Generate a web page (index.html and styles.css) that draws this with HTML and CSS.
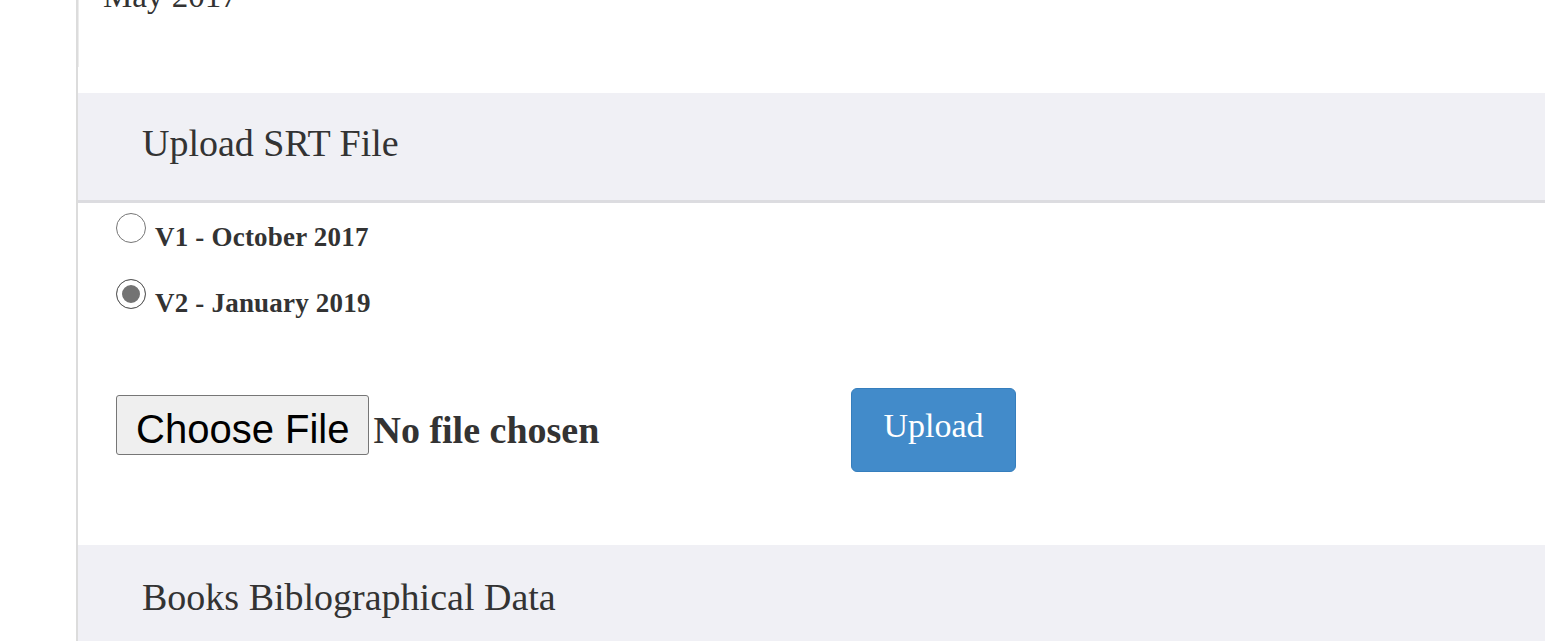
FILE: index.html
```html
<!DOCTYPE html>
<html lang="en">
<head>
<meta charset="utf-8">
<title>Upload SRT File</title>
<link rel="stylesheet" href="styles.css">
</head>
<body>
<div class="main">
  <div class="intro"><p>May 2017</p></div>
  <section class="panel">
    <h2 class="panel-head">Upload SRT File</h2>
    <form class="panel-body">
      <label class="radio-row"><input type="radio" name="ver" class="radio"><span class="radio-label">V1 - October 2017</span></label>
      <label class="radio-row"><input type="radio" name="ver" class="radio" checked><span class="radio-label">V2 - January 2019</span></label>
      <div class="file-row">
        <label class="file">
          <span class="file-btn">Choose File</span>
          <span class="file-name">No file chosen</span>
          <input type="file" class="file-input">
        </label>
        <button type="button" class="upload-btn">Upload</button>
      </div>
    </form>
  </section>
  <section class="panel panel-last">
    <h2 class="panel-head">Books Biblographical Data</h2>
  </section>
</div>
</body>
</html>
```
FILE: styles.css
```css
html, body {
  margin: 0;
  padding: 0;
  background: #fff;
  overflow: hidden;
}
body {
  font-family: "Liberation Serif", "Times New Roman", serif;
  color: #333;
}
.main {
  margin-left: 76px;
  border-left: 2px solid #dcdcdc;
}
.intro {
  margin-top: -23px;
  height: 90px;
  border-left: 1px solid #ececec;
  padding-left: 24px;
}
.intro p {
  margin: 0;
  font-size: 33px;
  line-height: 38px;
}
.panel {
  margin-top: 26px;
}
.panel-last {
  margin-top: 0;
  background: #f0f0f5;
  height: 96px;
}
.panel-head {
  margin: 0;
  padding: 29px 64px 36px;
  font-size: 38px;
  line-height: 42px;
  font-weight: normal;
  background: #f0f0f5;
  border-bottom: 3px solid #dcdce0;
}
.panel-last .panel-head {
  border-bottom: 0;
  padding: 31px 64px 23px;
}
.panel-body {
  margin: 0;
  padding: 10px 0 73px 38px;
}
.radio-row {
  display: flex;
  align-items: flex-start;
  gap: 9px;
  height: 40px;
  margin-bottom: 26px;
}
.radio {
  appearance: none;
  -webkit-appearance: none;
  margin: 0;
  width: 30px;
  height: 30px;
  border: 1px solid #767676;
  border-radius: 50%;
  background: #fff;
  flex: none;
}
.radio:checked {
  border-color: #5a5a5a;
  background: #737373;
  box-shadow: inset 0 0 0 5px #fff;
}
.radio-label {
  margin-top: 8px;
  font-size: 27px;
  line-height: 32px;
  font-weight: bold;
  letter-spacing: 0.2px;
}
.file-row {
  display: flex;
  align-items: flex-start;
  margin-top: 69px;
}
.file {
  width: 735px;
  display: flex;
  align-items: baseline;
  margin-top: 7px;
}
.file-btn {
  box-sizing: border-box;
  height: 60px;
  padding: 6px 19px 0;
  line-height: 54px;
  font-family: "Liberation Sans", Arial, sans-serif;
  font-size: 40px;
  color: #000;
  background: #efefef;
  border: 1px solid #767676;
  border-radius: 3px;
}
.file-name {
  margin-left: 4px;
  font-size: 38px;
  font-weight: bold;
  color: #333;
}
.file-input {
  display: none;
}
.upload-btn {
  box-sizing: border-box;
  width: 165px;
  height: 84px;
  padding: 0 0 8px;
  font-family: "Liberation Serif", "Times New Roman", serif;
  font-size: 34px;
  color: #fff;
  background: #428bca;
  border: 1px solid #357ebd;
  border-radius: 6px;
}
```
